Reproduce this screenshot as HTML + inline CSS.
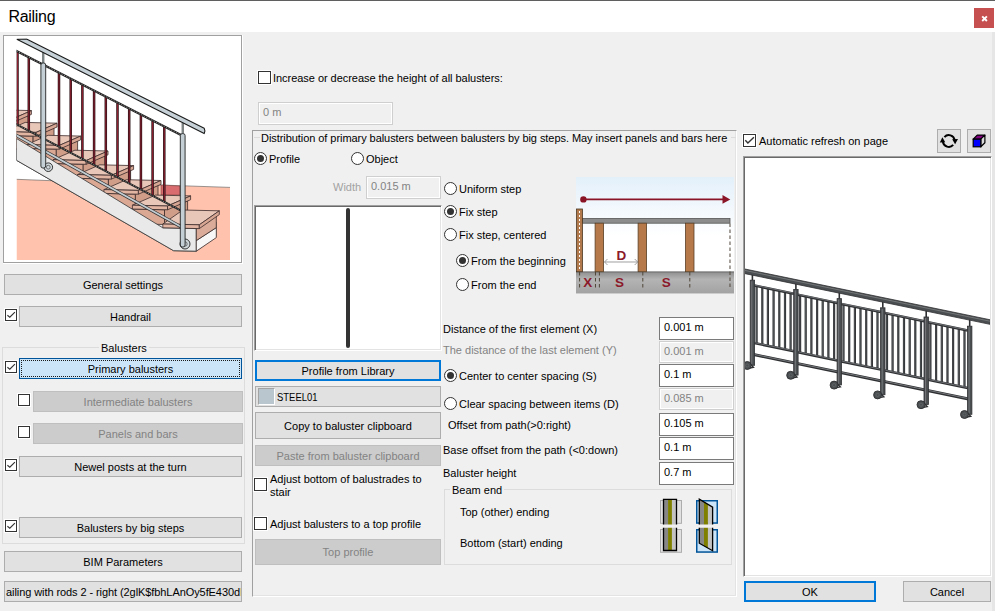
<!DOCTYPE html>
<html><head><meta charset="utf-8">
<style>
html,body{margin:0;padding:0;width:995px;height:611px;overflow:hidden;background:#f0f0f0;}
body{position:relative;font-family:"Liberation Sans",sans-serif;font-size:11px;color:#000;}
.a{position:absolute;box-sizing:border-box;}
.t{position:absolute;white-space:nowrap;line-height:13px;}
.g{color:#838383;}
.btn{position:absolute;box-sizing:border-box;background:#e1e1e1;border:1px solid #adadad;text-align:center;white-space:nowrap;line-height:13px;padding-top:4px;height:21px;}
.dis{background:#cccccc;border-color:#bfbfbf;color:#838383;}
.cb{position:absolute;box-sizing:border-box;width:12px;height:12px;border:1px solid #333;background:#fff;box-shadow:0 0 0 1px #fff;}
.cb.c13{width:13px;height:13px;}
.cb svg{position:absolute;left:-1px;top:-1px;}
.rb{position:absolute;box-sizing:border-box;width:13px;height:13px;border:1px solid #333;border-radius:50%;background:#fff;}
.rb.on::after{content:"";position:absolute;left:2px;top:2px;width:7px;height:7px;border-radius:50%;background:#333;}
.tb{position:absolute;box-sizing:border-box;background:#fff;border:1px solid #7a7a7a;white-space:nowrap;overflow:hidden;padding-left:4px;line-height:13px;padding-top:3px;}
.tb.d{background:#f0f0f0;border-color:#cfcfcf;color:#838383;box-shadow:inset 0 0 0 1px #fff;}
.sunk{position:absolute;box-sizing:border-box;background:#fff;border:1px solid;border-color:#a0a0a0 #fff #fff #a0a0a0;box-shadow:inset 1px 1px #696969,inset -1px -1px #e3e3e3;}
</style></head><body>
<!-- title bar -->
<div class="a" style="left:0;top:0;width:995px;height:32px;background:#fff;border-top:1px solid #5f5f5f;"></div>
<div class="t" style="left:8.5px;top:7px;font-size:16px;line-height:19px;letter-spacing:-0.3px;">Railing</div>
<div class="a" style="left:974px;top:8px;width:20px;height:20px;background:#c64f4f;"></div>
<svg class="a" style="left:974px;top:8px" width="20" height="20" viewBox="0 0 20 20"><path d="M8.2,8.3 L12.9,13 M12.9,8.3 L8.2,13" stroke="#fff" stroke-width="1.9" fill="none"/></svg>
<div class="a" style="left:992px;top:32px;width:3px;height:579px;background:#e6e6e6;"></div>

<!-- left column -->
<div class="a" style="left:3px;top:35px;width:240px;height:229px;border:1px solid;border-color:#fff;"></div>
<div class="a" style="left:3px;top:35px;width:239px;height:228px;border:1px solid #a0a0a0;background:#fff;"></div>
<svg class="a" style="left:0;top:0" width="250" height="270" viewBox="0 0 250 270"><defs><clipPath id="stc"><rect x="16.5" y="38.3" width="213.5" height="221.7"/></clipPath></defs><g clip-path="url(#stc)"><polygon points="16.5,179.3 50.5,180.8 160.0,185.0 230.0,187.4 230.0,260.0 16.5,260.0" fill="#ffc3ad"/><polyline points="16.5,179.3 160.0,185.0 230.0,187.4" fill="none" stroke="#555" stroke-width="0.6"/><polygon points="161.0,185.0 180.0,186.0 180.0,195.0 161.0,195.0" fill="#d86c6e" stroke="#6b3a3a" stroke-width="0.5"/><polygon points="16.5,136.0 163.0,222.0 216.0,222.0 216.0,236.5 196.0,251.2 173.6,250.7 16.5,160.3" fill="#e9e9e9" stroke="#333" stroke-width="0.8"/><polygon points="-19.2,122.6 8.0,123.4 8.0,136.4 -19.2,135.6" fill="#dba894" stroke="#3b2b2b" stroke-width="0.8" stroke-linejoin="round"/><polygon points="8.0,123.4 28.4,115.4 28.4,143.5 8.0,136.4" fill="#d09d88" stroke="#3b2b2b" stroke-width="0.8" stroke-linejoin="round"/><polygon points="-20.2,118.8 0.3,109.8 31.4,110.6 11.0,119.6" fill="#e9c7b8" stroke="#3b2b2b" stroke-width="0.8" stroke-linejoin="round"/><polygon points="-20.2,118.8 11.0,119.6 11.0,123.4 -20.2,122.6" fill="#e2b5a3" stroke="#3b2b2b" stroke-width="0.8" stroke-linejoin="round"/><polygon points="11.0,119.6 31.4,110.6 31.4,114.4 11.0,123.4" fill="#d8a794" stroke="#3b2b2b" stroke-width="0.8" stroke-linejoin="round"/><polygon points="5.3,135.4 33.1,136.2 33.1,149.5 5.3,148.7" fill="#dba894" stroke="#3b2b2b" stroke-width="0.8" stroke-linejoin="round"/><polygon points="33.1,136.2 54.0,128.0 54.0,157.7 33.1,149.5" fill="#d09d88" stroke="#3b2b2b" stroke-width="0.8" stroke-linejoin="round"/><polygon points="4.3,131.6 25.2,122.4 57.0,123.2 36.1,132.4" fill="#e9c7b8" stroke="#3b2b2b" stroke-width="0.8" stroke-linejoin="round"/><polygon points="4.3,131.6 36.1,132.4 36.1,136.2 4.3,135.4" fill="#e2b5a3" stroke="#3b2b2b" stroke-width="0.8" stroke-linejoin="round"/><polygon points="36.1,132.4 57.0,123.2 57.0,127.0 36.1,136.2" fill="#d8a794" stroke="#3b2b2b" stroke-width="0.8" stroke-linejoin="round"/><polygon points="27.8,148.4 56.3,149.2 56.3,162.9 27.8,162.1" fill="#dba894" stroke="#3b2b2b" stroke-width="0.8" stroke-linejoin="round"/><polygon points="56.3,149.2 77.6,140.9 77.6,170.8 56.3,162.9" fill="#d09d88" stroke="#3b2b2b" stroke-width="0.8" stroke-linejoin="round"/><polygon points="26.8,144.6 48.1,135.3 80.6,136.1 59.3,145.4" fill="#e9c7b8" stroke="#3b2b2b" stroke-width="0.8" stroke-linejoin="round"/><polygon points="26.8,144.6 59.3,145.4 59.3,149.2 26.8,148.4" fill="#e2b5a3" stroke="#3b2b2b" stroke-width="0.8" stroke-linejoin="round"/><polygon points="59.3,145.4 80.6,136.1 80.6,139.9 59.3,149.2" fill="#d8a794" stroke="#3b2b2b" stroke-width="0.8" stroke-linejoin="round"/><polygon points="54.1,163.5 83.2,164.3 83.2,178.2 54.1,177.4" fill="#dba894" stroke="#3b2b2b" stroke-width="0.8" stroke-linejoin="round"/><polygon points="83.2,164.3 105.0,155.8 105.0,186.0 83.2,178.2" fill="#d09d88" stroke="#3b2b2b" stroke-width="0.8" stroke-linejoin="round"/><polygon points="53.1,159.7 74.9,150.2 108.0,151.0 86.2,160.5" fill="#e9c7b8" stroke="#3b2b2b" stroke-width="0.8" stroke-linejoin="round"/><polygon points="53.1,159.7 86.2,160.5 86.2,164.3 53.1,163.5" fill="#e2b5a3" stroke="#3b2b2b" stroke-width="0.8" stroke-linejoin="round"/><polygon points="86.2,160.5 108.0,151.0 108.0,154.8 86.2,164.3" fill="#d8a794" stroke="#3b2b2b" stroke-width="0.8" stroke-linejoin="round"/><polygon points="78.6,178.3 108.4,179.1 108.4,193.3 78.6,192.5" fill="#dba894" stroke="#3b2b2b" stroke-width="0.8" stroke-linejoin="round"/><polygon points="108.4,179.1 130.6,170.4 130.6,200.2 108.4,193.3" fill="#d09d88" stroke="#3b2b2b" stroke-width="0.8" stroke-linejoin="round"/><polygon points="77.6,174.5 99.8,164.8 133.6,165.6 111.4,175.3" fill="#e9c7b8" stroke="#3b2b2b" stroke-width="0.8" stroke-linejoin="round"/><polygon points="77.6,174.5 111.4,175.3 111.4,179.1 77.6,178.3" fill="#e2b5a3" stroke="#3b2b2b" stroke-width="0.8" stroke-linejoin="round"/><polygon points="111.4,175.3 133.6,165.6 133.6,169.4 111.4,179.1" fill="#d8a794" stroke="#3b2b2b" stroke-width="0.8" stroke-linejoin="round"/><polygon points="104.9,193.4 135.4,194.2 135.4,208.7 104.9,207.9" fill="#dba894" stroke="#3b2b2b" stroke-width="0.8" stroke-linejoin="round"/><polygon points="135.4,194.2 158.0,185.3 158.0,215.4 135.4,208.7" fill="#d09d88" stroke="#3b2b2b" stroke-width="0.8" stroke-linejoin="round"/><polygon points="103.9,189.6 126.5,179.7 161.0,180.5 138.4,190.4" fill="#e9c7b8" stroke="#3b2b2b" stroke-width="0.8" stroke-linejoin="round"/><polygon points="103.9,189.6 138.4,190.4 138.4,194.2 103.9,193.4" fill="#e2b5a3" stroke="#3b2b2b" stroke-width="0.8" stroke-linejoin="round"/><polygon points="138.4,190.4 161.0,180.5 161.0,184.3 138.4,194.2" fill="#d8a794" stroke="#3b2b2b" stroke-width="0.8" stroke-linejoin="round"/><polygon points="133.4,209.0 164.5,209.8 164.5,224.5 133.4,223.7" fill="#dba894" stroke="#3b2b2b" stroke-width="0.8" stroke-linejoin="round"/><polygon points="164.5,209.8 187.6,200.7 187.6,231.9 164.5,224.5" fill="#d09d88" stroke="#3b2b2b" stroke-width="0.8" stroke-linejoin="round"/><polygon points="132.4,205.2 155.5,195.1 190.6,195.9 167.5,206.0" fill="#e9c7b8" stroke="#3b2b2b" stroke-width="0.8" stroke-linejoin="round"/><polygon points="132.4,205.2 167.5,206.0 167.5,209.8 132.4,209.0" fill="#e2b5a3" stroke="#3b2b2b" stroke-width="0.8" stroke-linejoin="round"/><polygon points="167.5,206.0 190.6,195.9 190.6,199.7 167.5,209.8" fill="#d8a794" stroke="#3b2b2b" stroke-width="0.8" stroke-linejoin="round"/><polygon points="16.5,138.5 162.8,227.8 196.3,228.6 196.3,251.2 173.6,250.7 16.5,160.3" fill="#e9e9e9" stroke="#333" stroke-width="0.8"/><polygon points="196.3,240.6 216.3,227.6 216.3,237.6 196.3,251.2" fill="#f7f7f7" stroke="#3b2b2b" stroke-width="0.8" stroke-linejoin="round"/><polygon points="196.3,228.6 216.3,215.6 216.3,227.6 196.3,240.6" fill="#d9ab98" stroke="#3b2b2b" stroke-width="0.8" stroke-linejoin="round"/><polygon points="162.8,224.0 182.8,210.0 219.3,210.8 199.3,224.8" fill="#e9c7b8" stroke="#3b2b2b" stroke-width="0.8" stroke-linejoin="round"/><polygon points="162.8,224.0 199.3,224.8 199.3,228.6 162.8,227.8" fill="#e2b5a3" stroke="#3b2b2b" stroke-width="0.8" stroke-linejoin="round"/><polygon points="199.3,224.8 219.3,210.8 219.3,214.6 199.3,228.6" fill="#d8a794" stroke="#3b2b2b" stroke-width="0.8" stroke-linejoin="round"/><line x1="17.5" y1="51.5" x2="17.5" y2="124.8" stroke="#2a1216" stroke-width="2.5"/><line x1="17.5" y1="51.5" x2="17.5" y2="124.8" stroke="#8c2030" stroke-width="1.1"/><line x1="28.8" y1="57.2" x2="28.8" y2="130.7" stroke="#2a1216" stroke-width="2.5"/><line x1="28.8" y1="57.2" x2="28.8" y2="130.7" stroke="#8c2030" stroke-width="1.1"/><line x1="59.0" y1="72.7" x2="59.0" y2="146.6" stroke="#2a1216" stroke-width="2.5"/><line x1="59.0" y1="72.7" x2="59.0" y2="146.6" stroke="#8c2030" stroke-width="1.1"/><line x1="70.7" y1="78.6" x2="70.7" y2="152.7" stroke="#2a1216" stroke-width="2.5"/><line x1="70.7" y1="78.6" x2="70.7" y2="152.7" stroke="#8c2030" stroke-width="1.1"/><line x1="82.4" y1="84.6" x2="82.4" y2="158.9" stroke="#2a1216" stroke-width="2.5"/><line x1="82.4" y1="84.6" x2="82.4" y2="158.9" stroke="#8c2030" stroke-width="1.1"/><line x1="94.1" y1="90.6" x2="94.1" y2="165.0" stroke="#2a1216" stroke-width="2.5"/><line x1="94.1" y1="90.6" x2="94.1" y2="165.0" stroke="#8c2030" stroke-width="1.1"/><line x1="105.8" y1="96.6" x2="105.8" y2="171.1" stroke="#2a1216" stroke-width="2.5"/><line x1="105.8" y1="96.6" x2="105.8" y2="171.1" stroke="#8c2030" stroke-width="1.1"/><line x1="117.5" y1="102.6" x2="117.5" y2="177.3" stroke="#2a1216" stroke-width="2.5"/><line x1="117.5" y1="102.6" x2="117.5" y2="177.3" stroke="#8c2030" stroke-width="1.1"/><line x1="129.2" y1="108.5" x2="129.2" y2="183.4" stroke="#2a1216" stroke-width="2.5"/><line x1="129.2" y1="108.5" x2="129.2" y2="183.4" stroke="#8c2030" stroke-width="1.1"/><line x1="140.9" y1="114.5" x2="140.9" y2="189.6" stroke="#2a1216" stroke-width="2.5"/><line x1="140.9" y1="114.5" x2="140.9" y2="189.6" stroke="#8c2030" stroke-width="1.1"/><line x1="152.6" y1="120.5" x2="152.6" y2="195.7" stroke="#2a1216" stroke-width="2.5"/><line x1="152.6" y1="120.5" x2="152.6" y2="195.7" stroke="#8c2030" stroke-width="1.1"/><line x1="164.3" y1="126.5" x2="164.3" y2="201.9" stroke="#2a1216" stroke-width="2.5"/><line x1="164.3" y1="126.5" x2="164.3" y2="201.9" stroke="#8c2030" stroke-width="1.1"/><line x1="14" y1="49.7" x2="181" y2="135.0" stroke="#222" stroke-width="2.2"/><line x1="14" y1="49.7" x2="181" y2="135.0" stroke="#ddd" stroke-width="0.6" stroke-dasharray="1.2 1.6"/><line x1="14" y1="123.0" x2="181" y2="210.6" stroke="#222" stroke-width="2"/><line x1="14" y1="123.0" x2="181" y2="210.6" stroke="#ccc" stroke-width="0.6" stroke-dasharray="1.2 1.6"/><line x1="14" y1="134.0" x2="182" y2="227.3" stroke="#333" stroke-width="3.2"/><line x1="14" y1="134.0" x2="182" y2="227.3" stroke="#c3cdd2" stroke-width="1.8"/><line x1="43.3" y1="51.5" x2="43.3" y2="63" stroke="#444" stroke-width="2"/><line x1="43.3" y1="51.5" x2="43.3" y2="63" stroke="#9aa" stroke-width="0.8"/><circle cx="48.3" cy="167.2" r="4.3" fill="#d0d8dc" stroke="#222" stroke-width="0.9"/><circle cx="48.3" cy="167.2" r="1.9" fill="none" stroke="#444" stroke-width="0.7"/><rect x="40.9" y="63" width="4.8" height="105" rx="2" fill="#c3cfd5" stroke="#222" stroke-width="0.9"/><line x1="182.7" y1="123" x2="182.7" y2="133.6" stroke="#444" stroke-width="2"/><line x1="182.7" y1="123" x2="182.7" y2="133.6" stroke="#9aa" stroke-width="0.8"/><circle cx="185" cy="244" r="5" fill="#d0d8dc" stroke="#222" stroke-width="0.9"/><circle cx="185" cy="244" r="2.2" fill="none" stroke="#444" stroke-width="0.7"/><rect x="180.29999999999998" y="133.6" width="4.8" height="113.4" rx="2" fill="#c3cfd5" stroke="#222" stroke-width="0.9"/><path d="M16.8,39.3 L26.5,39 L204.2,128.2 Q205.6,130.9 204.2,133.6 Z" fill="#c6d1d7" stroke="#1a1a1a" stroke-width="1.1" stroke-linejoin="round"/></g></svg>
<div class="btn" style="left:4px;top:274px;width:238px;">General settings</div>
<div class="cb" style="left:5px;top:309px;"><svg width="12" height="12" viewBox="0 0 12 12"><polyline points="2.4,6.3 4.8,8.2 9.9,3.2" fill="none" stroke="#333" stroke-width="1.15"/></svg>
</div>
<div class="btn" style="left:19px;top:306px;width:223px;">Handrail</div>
<div class="a" style="left:2px;top:347px;width:243px;height:197px;border:1px solid #dcdcdc;"></div>
<div class="t" style="left:99px;top:342px;background:#f0f0f0;padding:0 2px;">Balusters</div>
<div class="cb" style="left:5px;top:361px;"><svg width="12" height="12" viewBox="0 0 12 12"><polyline points="2.4,6.3 4.8,8.2 9.9,3.2" fill="none" stroke="#333" stroke-width="1.15"/></svg>
</div>
<div class="btn" style="left:19px;top:358px;width:223px;background:#cce4f7;border-color:#005499;">Primary balusters</div>
<div class="a" style="left:21px;top:360px;width:219px;height:17px;border:1px dotted #1a1a1a;"></div>
<div class="cb" style="left:18px;top:394px;"></div>
<div class="btn dis" style="left:33px;top:391px;width:210px;">Intermediate balusters</div>
<div class="cb" style="left:18px;top:426px;"></div>
<div class="btn dis" style="left:33px;top:423px;width:210px;">Panels and bars</div>
<div class="cb" style="left:5px;top:459px;"><svg width="12" height="12" viewBox="0 0 12 12"><polyline points="2.4,6.3 4.8,8.2 9.9,3.2" fill="none" stroke="#333" stroke-width="1.15"/></svg>
</div>
<div class="btn" style="left:19px;top:456px;width:223px;">Newel posts at the turn</div>
<div class="cb" style="left:5px;top:520px;"><svg width="12" height="12" viewBox="0 0 12 12"><polyline points="2.4,6.3 4.8,8.2 9.9,3.2" fill="none" stroke="#333" stroke-width="1.15"/></svg>
</div>
<div class="btn" style="left:19px;top:517px;width:223px;">Balusters by big steps</div>
<div class="btn" style="left:4px;top:551px;width:238px;">BIM Parameters</div>
<div class="btn" style="left:4px;top:581px;width:238px;text-align:left;overflow:hidden;padding-left:1px;letter-spacing:-0.08px;">ailing with rods 2 - right (2glK$fbhLAnOy5fE430dI</div>

<!-- middle -->
<div class="cb c13" style="left:258px;top:71px;"></div>
<div class="t" style="left:273px;top:72px;letter-spacing:-0.04px;">Increase or decrease the height of all balusters:</div>
<div class="tb d" style="left:258px;top:102px;width:135px;height:23px;">0 m</div>
<div class="a" style="left:252px;top:130px;width:485px;height:467px;border:1px solid;border-color:#a0a0a0 #fff #fff #a0a0a0;box-shadow:inset -1px -1px #e3e3e3;"></div>
<div class="a" style="left:254px;top:137px;width:6px;height:1px;background:#dcdcdc;"></div>
<div class="a" style="left:731px;top:137px;width:5px;height:1px;background:#dcdcdc;"></div>
<div class="t" style="left:261px;top:132px;letter-spacing:-0.06px;">Distribution of primary balusters between balusters by big steps. May insert panels and bars here</div>
<div class="rb on" style="left:254px;top:152px;"></div>
<div class="t" style="left:269px;top:153px;">Profile</div>
<div class="rb" style="left:351px;top:152px;"></div>
<div class="t" style="left:366px;top:153px;">Object</div>
<div class="t" style="left:333px;top:181px;color:#a2a2a2;">Width</div>
<div class="tb d" style="left:366px;top:176px;width:75px;height:23px;">0.015 m</div>
<div class="sunk" style="left:254px;top:205px;width:188px;height:146px;"></div>
<div class="a" style="left:346px;top:208px;width:4px;height:140px;background:#333;border-radius:2px;"></div>
<div class="btn" style="left:255px;top:360px;width:186px;height:21px;border:2px solid #0078d7;padding-top:3px;">Profile from Library</div>
<div class="btn" style="left:255px;top:386px;width:186px;text-align:left;padding-left:21px;"><span style="display:inline-block;transform:scaleX(0.86);transform-origin:0 0;">STEEL01</span></div>
<div class="a" style="left:258px;top:388px;width:17px;height:17px;background:#bac6cd;border:1px solid;border-color:#a3a3a3 #fff #fff #a3a3a3;"></div>
<div class="btn" style="left:255px;top:412px;width:186px;height:27px;padding-top:7px;">Copy to baluster clipboard</div>
<div class="btn dis" style="left:255px;top:445px;width:186px;">Paste from baluster clipboard</div>
<div class="cb c13" style="left:254px;top:478px;"></div>
<div class="t" style="left:270px;top:473px;">Adjust bottom of balustrades to<br>stair</div>
<div class="cb c13" style="left:254px;top:517px;"></div>
<div class="t" style="left:270px;top:518px;">Adjust balusters to a top profile</div>
<div class="btn dis" style="left:255px;top:539px;width:186px;height:26px;padding-top:6px;">Top profile</div>

<div class="rb" style="left:444px;top:182px;"></div>
<div class="t" style="left:459px;top:183px;">Uniform step</div>
<div class="rb on" style="left:444px;top:205px;"></div>
<div class="t" style="left:459px;top:206px;">Fix step</div>
<div class="rb" style="left:444px;top:228px;"></div>
<div class="t" style="left:459px;top:229px;">Fix step, centered</div>
<div class="rb on" style="left:456px;top:254px;"></div>
<div class="t" style="left:471px;top:255px;">From the beginning</div>
<div class="rb" style="left:456px;top:278px;"></div>
<div class="t" style="left:471px;top:279px;">From the end</div>
<svg class="a" style="left:576px;top:177px" width="158.3" height="116.5" viewBox="0 0 158.3 116.5"><defs><linearGradient id="dbg" x1="0" y1="0" x2="0" y2="1"><stop offset="0" stop-color="#e3f0fa"/><stop offset="0.5" stop-color="#ffffff"/></linearGradient><linearGradient id="dgr" x1="0" y1="0" x2="0" y2="1"><stop offset="0" stop-color="#8e8e8e"/><stop offset="0.35" stop-color="#b4b4b4"/><stop offset="1" stop-color="#a2a2a2"/></linearGradient></defs><rect x="0" y="0" width="158.3" height="116.5" fill="url(#dbg)"/><rect x="0" y="94.69999999999999" width="158.3" height="21.80000000000001" fill="url(#dgr)"/><line x1="0" y1="95" x2="158.3" y2="95" stroke="#6e6e6e" stroke-width="1"/><circle cx="7.399999999999977" cy="22.400000000000006" r="3.2" fill="#8a1526"/><line x1="7.399999999999977" y1="22.400000000000006" x2="148" y2="22.400000000000006" stroke="#8a1526" stroke-width="1.8"/><polygon points="146.5,18 154.29999999999995,22.400000000000006 146.5,26.80000000000001" fill="#8a1526"/><rect x="6.5" y="41.5" width="147.5" height="4.7" fill="#8c8c8c" stroke="#555" stroke-width="0.8"/><rect x="0.6000000000000227" y="32" width="5.8" height="62.69999999999999" fill="#b27a4c" stroke="#4a3520" stroke-width="0.8"/><line x1="3.5" y1="34" x2="3.5" y2="94" stroke="#fff" stroke-width="1" stroke-dasharray="2 2"/><rect x="19.100000000000023" y="46.19999999999999" width="8.5" height="48.5" fill="#b5794a" stroke="#5a4026" stroke-width="0.8"/><rect x="62.10000000000002" y="46.19999999999999" width="8.5" height="48.5" fill="#b5794a" stroke="#5a4026" stroke-width="0.8"/><rect x="109.5" y="46.19999999999999" width="8.5" height="48.5" fill="#b5794a" stroke="#5a4026" stroke-width="0.8"/><line x1="3.6000000000000227" y1="95" x2="3.6000000000000227" y2="111.5" stroke="#4f4538" stroke-width="1" stroke-dasharray="3.5 2.5"/><line x1="19.5" y1="95" x2="19.5" y2="111.5" stroke="#4f4538" stroke-width="1" stroke-dasharray="3.5 2.5"/><line x1="23.399999999999977" y1="95" x2="23.399999999999977" y2="111.5" stroke="#4f4538" stroke-width="1" stroke-dasharray="3.5 2.5"/><line x1="66.79999999999995" y1="95" x2="66.79999999999995" y2="111.5" stroke="#4f4538" stroke-width="1" stroke-dasharray="3.5 2.5"/><line x1="113.79999999999995" y1="95" x2="113.79999999999995" y2="111.5" stroke="#4f4538" stroke-width="1" stroke-dasharray="3.5 2.5"/><line x1="154" y1="46.5" x2="154" y2="111.5" stroke="#4f4538" stroke-width="1" stroke-dasharray="3.5 2.5"/><line x1="28.5" y1="85" x2="61.700000000000045" y2="85" stroke="#888" stroke-width="0.8"/><polyline points="31.5,82 28.5,85 31.5,88" fill="none" stroke="#888" stroke-width="0.8"/><polyline points="58.700000000000045,82 61.700000000000045,85 58.700000000000045,88" fill="none" stroke="#888" stroke-width="0.8"/><text x="45.5" y="83.19999999999999" font-size="13.5" font-family="Liberation Sans" font-weight="bold" fill="#8b1a2a" text-anchor="middle">D</text><text x="11.700000000000045" y="109.80000000000001" font-size="13.5" font-family="Liberation Sans" font-weight="bold" fill="#8b1a2a" text-anchor="middle">X</text><text x="43.39999999999998" y="109.80000000000001" font-size="13.5" font-family="Liberation Sans" font-weight="bold" fill="#8b1a2a" text-anchor="middle">S</text><text x="90.20000000000005" y="109.80000000000001" font-size="13.5" font-family="Liberation Sans" font-weight="bold" fill="#8b1a2a" text-anchor="middle">S</text></svg>

<div class="t" style="left:443px;top:323px;">Distance of the first element (X)</div>
<div class="tb" style="left:659px;top:317px;width:75px;height:23px;">0.001 m</div>
<div class="t g" style="left:443px;top:344px;">The distance of the last element (Y)</div>
<div class="tb d" style="left:659px;top:341px;width:75px;height:22px;">0.001 m</div>
<div class="rb on" style="left:444px;top:369px;"></div>
<div class="t" style="left:459px;top:370px;">Center to center spacing (S)</div>
<div class="tb" style="left:659px;top:364px;width:75px;height:23px;">0.1 m</div>
<div class="rb" style="left:444px;top:397px;"></div>
<div class="t" style="left:459px;top:398px;">Clear spacing between items (D)</div>
<div class="tb d" style="left:659px;top:388px;width:75px;height:22px;">0.085 m</div>
<div class="t" style="left:448px;top:419px;">Offset from path(&gt;0:right)</div>
<div class="tb" style="left:659px;top:413px;width:75px;height:23px;">0.105 m</div>
<div class="t" style="left:443px;top:444px;">Base offset from the path (&lt;0:down)</div>
<div class="tb" style="left:659px;top:437px;width:75px;height:23px;">0.1 m</div>
<div class="t" style="left:443px;top:467px;">Baluster height</div>
<div class="tb" style="left:659px;top:462px;width:75px;height:23px;">0.7 m</div>

<div class="a" style="left:444px;top:489px;width:288px;height:76px;border:1px solid #dcdcdc;"></div>
<div class="t" style="left:450px;top:484px;background:#f0f0f0;padding:0 2px;">Beam end</div>
<div class="t" style="left:460px;top:506px;">Top (other) ending</div>
<div class="t" style="left:460px;top:537px;">Bottom (start) ending</div>
<svg class="a" style="left:655px;top:495px" width="70" height="62" viewBox="655 495 70 62"><rect x="660.5" y="500.5" width="21" height="22.799999999999955" fill="#e1e1e1" stroke="#adadad" stroke-width="1"/><clipPath id="bc663499"><polygon points="663.5,499.3 676.5,499.3 676.5,524.5 663.5,524.5"/></clipPath><g clip-path="url(#bc663499)"><rect x="663.5" y="490" width="4.55" height="70" fill="#878787"/><rect x="668.05" y="490" width="3.9" height="70" fill="#808000"/><rect x="671.95" y="490" width="4.55" height="70" fill="#c3c3c3"/></g><polyline points="663.5,524.5 663.5,499.3 676.5,499.3 676.5,524.5" fill="none" stroke="#000" stroke-width="1.3" stroke-linejoin="miter"/><rect x="660.5" y="529.5" width="21" height="22.799999999999955" fill="#e1e1e1" stroke="#adadad" stroke-width="1"/><clipPath id="bc663527"><polygon points="663.5,527.8 676.5,527.8 676.5,550.5 663.5,550.5"/></clipPath><g clip-path="url(#bc663527)"><rect x="663.5" y="490" width="4.55" height="70" fill="#878787"/><rect x="668.05" y="490" width="3.9" height="70" fill="#808000"/><rect x="671.95" y="490" width="4.55" height="70" fill="#c3c3c3"/></g><polyline points="663.5,527.8 663.5,550.5 676.5,550.5 676.5,527.8" fill="none" stroke="#000" stroke-width="1.3" stroke-linejoin="miter"/><rect x="696.75" y="500.75" width="20.5" height="22.299999999999955" fill="#cce4f7" stroke="#005499" stroke-width="1.5"/><clipPath id="bc699499"><polygon points="699.3,499.2 712.6,507.2 712.6,524.5 699.3,524.5"/></clipPath><g clip-path="url(#bc699499)"><rect x="699.3" y="490" width="4.655000000000023" height="70" fill="#878787"/><rect x="703.9549999999999" y="490" width="3.99000000000002" height="70" fill="#808000"/><rect x="707.945" y="490" width="4.655000000000023" height="70" fill="#c3c3c3"/></g><polyline points="699.3,524.5 699.3,499.2 712.6,507.2 712.6,524.5" fill="none" stroke="#000" stroke-width="1.3" stroke-linejoin="miter"/><rect x="696.75" y="529.75" width="20.5" height="22.299999999999955" fill="#cce4f7" stroke="#005499" stroke-width="1.5"/><clipPath id="bc699527"><polygon points="699.3,527.8 712.6,527.8 712.6,550.7 699.3,543.2"/></clipPath><g clip-path="url(#bc699527)"><rect x="699.3" y="490" width="4.655000000000023" height="70" fill="#878787"/><rect x="703.9549999999999" y="490" width="3.99000000000002" height="70" fill="#808000"/><rect x="707.945" y="490" width="4.655000000000023" height="70" fill="#c3c3c3"/></g><polyline points="699.3,527.8 699.3,543.2 712.6,550.7 712.6,527.8" fill="none" stroke="#000" stroke-width="1.3" stroke-linejoin="miter"/></svg>

<!-- right -->
<div class="cb c13" style="left:743px;top:134px;"><svg width="13" height="13" viewBox="0 0 13 13"><polyline points="2.3,6.3 4.9,9.1 10.9,3.2" fill="none" stroke="#333" stroke-width="1.4"/></svg>
</div>
<div class="t" style="left:759px;top:135px;">Automatic refresh on page</div>
<div class="btn" style="left:937px;top:129px;width:24px;height:24px;"></div>
<div class="btn" style="left:967px;top:129px;width:24px;height:24px;"></div>
<svg class="a" style="left:930px;top:125px" width="65" height="32" viewBox="930 125 65 32"><path d="M944.42,137.05 A5.9,5.9 0 0 1 954.64,140.18" fill="none" stroke="#000" stroke-width="2"/><path d="M953.18,144.95 A5.9,5.9 0 0 1 942.96,141.82" fill="none" stroke="#000" stroke-width="2"/><polygon points="952.2,139.3 958.0,139.0 955.1,144.2" fill="#000"/><polygon points="939.8,142.5 945.2,142.2 942.4,137.2" fill="#000"/><polygon points="973.2,139.2 977.2,135.1 984.9,135.1 980.8,139.2" fill="#800080" stroke="#000" stroke-width="1.2" stroke-linejoin="round"/><polygon points="980.8,139.2 984.9,135.1 984.9,142.8 980.8,146.8" fill="#d9d9d9" stroke="#000" stroke-width="1.2" stroke-linejoin="round"/><rect x="973.2" y="139.2" width="7.6" height="7.6" fill="#0000ff" stroke="#000" stroke-width="1.2"/></svg>
<div class="sunk" style="left:743px;top:156px;width:249px;height:421px;"></div>
<svg class="a" style="left:745px;top:158px" width="245" height="416" viewBox="745 158 245 416"><line x1="752.4" y1="354.3" x2="969.7" y2="399.2" stroke="#2e3032" stroke-width="3"/><line x1="752.4" y1="354.0" x2="969.7" y2="398.9" stroke="#8a8d90" stroke-width="0.8"/><line x1="756.6" y1="286.0" x2="756.6" y2="343.5" stroke="#2e3032" stroke-width="2.2"/><line x1="756.4" y1="286.0" x2="756.4" y2="343.5" stroke="#6a6d70" stroke-width="0.6"/><line x1="762.3" y1="287.1" x2="762.3" y2="344.6" stroke="#2e3032" stroke-width="2.2"/><line x1="762.1" y1="287.1" x2="762.1" y2="344.6" stroke="#6a6d70" stroke-width="0.6"/><line x1="767.9" y1="288.3" x2="767.9" y2="345.8" stroke="#2e3032" stroke-width="2.2"/><line x1="767.7" y1="288.3" x2="767.7" y2="345.8" stroke="#6a6d70" stroke-width="0.6"/><line x1="773.6" y1="289.5" x2="773.6" y2="347.0" stroke="#2e3032" stroke-width="2.2"/><line x1="773.4" y1="289.5" x2="773.4" y2="347.0" stroke="#6a6d70" stroke-width="0.6"/><line x1="779.3" y1="290.7" x2="779.3" y2="348.2" stroke="#2e3032" stroke-width="2.2"/><line x1="779.1" y1="290.7" x2="779.1" y2="348.2" stroke="#6a6d70" stroke-width="0.6"/><line x1="785.0" y1="291.8" x2="785.0" y2="349.3" stroke="#2e3032" stroke-width="2.2"/><line x1="784.8" y1="291.8" x2="784.8" y2="349.3" stroke="#6a6d70" stroke-width="0.6"/><line x1="790.6" y1="293.0" x2="790.6" y2="350.5" stroke="#2e3032" stroke-width="2.2"/><line x1="790.4" y1="293.0" x2="790.4" y2="350.5" stroke="#6a6d70" stroke-width="0.6"/><line x1="754.4" y1="285.5" x2="793.9" y2="293.7" stroke="#2e3032" stroke-width="2.6"/><line x1="754.4" y1="285.1" x2="793.9" y2="293.3" stroke="#8a8d90" stroke-width="0.7"/><line x1="754.4" y1="343.0" x2="793.9" y2="351.2" stroke="#2e3032" stroke-width="2.6"/><line x1="754.4" y1="342.6" x2="793.9" y2="350.8" stroke="#8a8d90" stroke-width="0.7"/><line x1="800.1" y1="295.2" x2="800.1" y2="352.7" stroke="#2e3032" stroke-width="2.2"/><line x1="799.9" y1="295.2" x2="799.9" y2="352.7" stroke="#6a6d70" stroke-width="0.6"/><line x1="805.7" y1="296.3" x2="805.7" y2="353.8" stroke="#2e3032" stroke-width="2.2"/><line x1="805.5" y1="296.3" x2="805.5" y2="353.8" stroke="#6a6d70" stroke-width="0.6"/><line x1="811.4" y1="297.5" x2="811.4" y2="355.0" stroke="#2e3032" stroke-width="2.2"/><line x1="811.2" y1="297.5" x2="811.2" y2="355.0" stroke="#6a6d70" stroke-width="0.6"/><line x1="817.1" y1="298.7" x2="817.1" y2="356.2" stroke="#2e3032" stroke-width="2.2"/><line x1="816.9" y1="298.7" x2="816.9" y2="356.2" stroke="#6a6d70" stroke-width="0.6"/><line x1="822.7" y1="299.9" x2="822.7" y2="357.4" stroke="#2e3032" stroke-width="2.2"/><line x1="822.5" y1="299.9" x2="822.5" y2="357.4" stroke="#6a6d70" stroke-width="0.6"/><line x1="828.4" y1="301.0" x2="828.4" y2="358.5" stroke="#2e3032" stroke-width="2.2"/><line x1="828.2" y1="301.0" x2="828.2" y2="358.5" stroke="#6a6d70" stroke-width="0.6"/><line x1="834.1" y1="302.2" x2="834.1" y2="359.7" stroke="#2e3032" stroke-width="2.2"/><line x1="833.9" y1="302.2" x2="833.9" y2="359.7" stroke="#6a6d70" stroke-width="0.6"/><line x1="797.9" y1="294.7" x2="837.3" y2="302.9" stroke="#2e3032" stroke-width="2.6"/><line x1="797.9" y1="294.3" x2="837.3" y2="302.5" stroke="#8a8d90" stroke-width="0.7"/><line x1="797.9" y1="352.2" x2="837.3" y2="360.4" stroke="#2e3032" stroke-width="2.6"/><line x1="797.9" y1="351.8" x2="837.3" y2="360.0" stroke="#8a8d90" stroke-width="0.7"/><line x1="843.5" y1="304.4" x2="843.5" y2="361.9" stroke="#2e3032" stroke-width="2.2"/><line x1="843.3" y1="304.4" x2="843.3" y2="361.9" stroke="#6a6d70" stroke-width="0.6"/><line x1="849.2" y1="305.5" x2="849.2" y2="363.0" stroke="#2e3032" stroke-width="2.2"/><line x1="849.0" y1="305.5" x2="849.0" y2="363.0" stroke="#6a6d70" stroke-width="0.6"/><line x1="854.9" y1="306.7" x2="854.9" y2="364.2" stroke="#2e3032" stroke-width="2.2"/><line x1="854.7" y1="306.7" x2="854.7" y2="364.2" stroke="#6a6d70" stroke-width="0.6"/><line x1="860.5" y1="307.9" x2="860.5" y2="365.4" stroke="#2e3032" stroke-width="2.2"/><line x1="860.3" y1="307.9" x2="860.3" y2="365.4" stroke="#6a6d70" stroke-width="0.6"/><line x1="866.2" y1="309.1" x2="866.2" y2="366.6" stroke="#2e3032" stroke-width="2.2"/><line x1="866.0" y1="309.1" x2="866.0" y2="366.6" stroke="#6a6d70" stroke-width="0.6"/><line x1="871.9" y1="310.2" x2="871.9" y2="367.7" stroke="#2e3032" stroke-width="2.2"/><line x1="871.7" y1="310.2" x2="871.7" y2="367.7" stroke="#6a6d70" stroke-width="0.6"/><line x1="877.5" y1="311.4" x2="877.5" y2="368.9" stroke="#2e3032" stroke-width="2.2"/><line x1="877.3" y1="311.4" x2="877.3" y2="368.9" stroke="#6a6d70" stroke-width="0.6"/><line x1="841.3" y1="303.9" x2="880.8" y2="312.1" stroke="#2e3032" stroke-width="2.6"/><line x1="841.3" y1="303.5" x2="880.8" y2="311.7" stroke="#8a8d90" stroke-width="0.7"/><line x1="841.3" y1="361.4" x2="880.8" y2="369.6" stroke="#2e3032" stroke-width="2.6"/><line x1="841.3" y1="361.0" x2="880.8" y2="369.2" stroke="#8a8d90" stroke-width="0.7"/><line x1="887.0" y1="313.6" x2="887.0" y2="371.1" stroke="#2e3032" stroke-width="2.2"/><line x1="886.8" y1="313.6" x2="886.8" y2="371.1" stroke="#6a6d70" stroke-width="0.6"/><line x1="892.6" y1="314.7" x2="892.6" y2="372.2" stroke="#2e3032" stroke-width="2.2"/><line x1="892.4" y1="314.7" x2="892.4" y2="372.2" stroke="#6a6d70" stroke-width="0.6"/><line x1="898.3" y1="315.9" x2="898.3" y2="373.4" stroke="#2e3032" stroke-width="2.2"/><line x1="898.1" y1="315.9" x2="898.1" y2="373.4" stroke="#6a6d70" stroke-width="0.6"/><line x1="904.0" y1="317.1" x2="904.0" y2="374.6" stroke="#2e3032" stroke-width="2.2"/><line x1="903.8" y1="317.1" x2="903.8" y2="374.6" stroke="#6a6d70" stroke-width="0.6"/><line x1="909.7" y1="318.3" x2="909.7" y2="375.8" stroke="#2e3032" stroke-width="2.2"/><line x1="909.5" y1="318.3" x2="909.5" y2="375.8" stroke="#6a6d70" stroke-width="0.6"/><line x1="915.3" y1="319.4" x2="915.3" y2="376.9" stroke="#2e3032" stroke-width="2.2"/><line x1="915.1" y1="319.4" x2="915.1" y2="376.9" stroke="#6a6d70" stroke-width="0.6"/><line x1="921.0" y1="320.6" x2="921.0" y2="378.1" stroke="#2e3032" stroke-width="2.2"/><line x1="920.8" y1="320.6" x2="920.8" y2="378.1" stroke="#6a6d70" stroke-width="0.6"/><line x1="884.8" y1="313.1" x2="924.2" y2="321.3" stroke="#2e3032" stroke-width="2.6"/><line x1="884.8" y1="312.7" x2="924.2" y2="320.9" stroke="#8a8d90" stroke-width="0.7"/><line x1="884.8" y1="370.6" x2="924.2" y2="378.8" stroke="#2e3032" stroke-width="2.6"/><line x1="884.8" y1="370.2" x2="924.2" y2="378.4" stroke="#8a8d90" stroke-width="0.7"/><line x1="930.4" y1="322.8" x2="930.4" y2="380.3" stroke="#2e3032" stroke-width="2.2"/><line x1="930.2" y1="322.8" x2="930.2" y2="380.3" stroke="#6a6d70" stroke-width="0.6"/><line x1="936.1" y1="323.9" x2="936.1" y2="381.4" stroke="#2e3032" stroke-width="2.2"/><line x1="935.9" y1="323.9" x2="935.9" y2="381.4" stroke="#6a6d70" stroke-width="0.6"/><line x1="941.8" y1="325.1" x2="941.8" y2="382.6" stroke="#2e3032" stroke-width="2.2"/><line x1="941.6" y1="325.1" x2="941.6" y2="382.6" stroke="#6a6d70" stroke-width="0.6"/><line x1="947.5" y1="326.3" x2="947.5" y2="383.8" stroke="#2e3032" stroke-width="2.2"/><line x1="947.2" y1="326.3" x2="947.2" y2="383.8" stroke="#6a6d70" stroke-width="0.6"/><line x1="953.1" y1="327.5" x2="953.1" y2="385.0" stroke="#2e3032" stroke-width="2.2"/><line x1="952.9" y1="327.5" x2="952.9" y2="385.0" stroke="#6a6d70" stroke-width="0.6"/><line x1="958.8" y1="328.6" x2="958.8" y2="386.1" stroke="#2e3032" stroke-width="2.2"/><line x1="958.6" y1="328.6" x2="958.6" y2="386.1" stroke="#6a6d70" stroke-width="0.6"/><line x1="964.5" y1="329.8" x2="964.5" y2="387.3" stroke="#2e3032" stroke-width="2.2"/><line x1="964.3" y1="329.8" x2="964.3" y2="387.3" stroke="#6a6d70" stroke-width="0.6"/><line x1="928.2" y1="322.3" x2="967.7" y2="330.5" stroke="#2e3032" stroke-width="2.6"/><line x1="928.2" y1="321.9" x2="967.7" y2="330.1" stroke="#8a8d90" stroke-width="0.7"/><line x1="928.2" y1="379.8" x2="967.7" y2="388.0" stroke="#2e3032" stroke-width="2.6"/><line x1="928.2" y1="379.4" x2="967.7" y2="387.6" stroke="#8a8d90" stroke-width="0.7"/><line x1="752.4" y1="274.6" x2="752.4" y2="280.2" stroke="#2e3032" stroke-width="1.6"/><rect x="750.2" y="280.2" width="4.4" height="85.1" fill="#4b4e50" stroke="#2e3032" stroke-width="0.8"/><line x1="751.8" y1="281.2" x2="751.8" y2="364.3" stroke="#8a8d90" stroke-width="0.7"/><path d="M750.4,364.3 L753.4,367.3 L747.2,368.5" fill="none" stroke="#2e3032" stroke-width="1.4"/><circle cx="747.2" cy="365.5" r="4" fill="#4b4e50" stroke="#2e3032" stroke-width="0.9"/><circle cx="747.2" cy="365.5" r="1.6" fill="none" stroke="#6a6d70" stroke-width="0.6"/><line x1="795.9" y1="283.6" x2="795.9" y2="289.4" stroke="#2e3032" stroke-width="1.6"/><rect x="793.7" y="289.4" width="4.4" height="85.7" fill="#4b4e50" stroke="#2e3032" stroke-width="0.8"/><line x1="795.3" y1="290.4" x2="795.3" y2="374.1" stroke="#8a8d90" stroke-width="0.7"/><path d="M793.9,374.1 L796.9,377.1 L790.7,378.3" fill="none" stroke="#2e3032" stroke-width="1.4"/><circle cx="790.7" cy="375.3" r="4" fill="#4b4e50" stroke="#2e3032" stroke-width="0.9"/><circle cx="790.7" cy="375.3" r="1.6" fill="none" stroke="#6a6d70" stroke-width="0.6"/><line x1="839.3" y1="292.6" x2="839.3" y2="298.6" stroke="#2e3032" stroke-width="1.6"/><rect x="837.1" y="298.6" width="4.4" height="86.3" fill="#4b4e50" stroke="#2e3032" stroke-width="0.8"/><line x1="838.7" y1="299.6" x2="838.7" y2="383.9" stroke="#8a8d90" stroke-width="0.7"/><path d="M837.3,383.9 L840.3,386.9 L834.1,388.1" fill="none" stroke="#2e3032" stroke-width="1.4"/><circle cx="834.1" cy="385.1" r="4" fill="#4b4e50" stroke="#2e3032" stroke-width="0.9"/><circle cx="834.1" cy="385.1" r="1.6" fill="none" stroke="#6a6d70" stroke-width="0.6"/><line x1="882.8" y1="301.6" x2="882.8" y2="307.8" stroke="#2e3032" stroke-width="1.6"/><rect x="880.6" y="307.8" width="4.4" height="86.9" fill="#4b4e50" stroke="#2e3032" stroke-width="0.8"/><line x1="882.2" y1="308.8" x2="882.2" y2="393.7" stroke="#8a8d90" stroke-width="0.7"/><path d="M880.8,393.7 L883.8,396.7 L877.6,397.9" fill="none" stroke="#2e3032" stroke-width="1.4"/><circle cx="877.6" cy="394.9" r="4" fill="#4b4e50" stroke="#2e3032" stroke-width="0.9"/><circle cx="877.6" cy="394.9" r="1.6" fill="none" stroke="#6a6d70" stroke-width="0.6"/><line x1="926.2" y1="310.6" x2="926.2" y2="317.0" stroke="#2e3032" stroke-width="1.6"/><rect x="924.0" y="317.0" width="4.4" height="87.5" fill="#4b4e50" stroke="#2e3032" stroke-width="0.8"/><line x1="925.6" y1="318.0" x2="925.6" y2="403.5" stroke="#8a8d90" stroke-width="0.7"/><path d="M924.2,403.5 L927.2,406.5 L921.0,407.7" fill="none" stroke="#2e3032" stroke-width="1.4"/><circle cx="921.0" cy="404.7" r="4" fill="#4b4e50" stroke="#2e3032" stroke-width="0.9"/><circle cx="921.0" cy="404.7" r="1.6" fill="none" stroke="#6a6d70" stroke-width="0.6"/><line x1="969.7" y1="319.6" x2="969.7" y2="326.2" stroke="#2e3032" stroke-width="1.6"/><rect x="967.5" y="326.2" width="4.4" height="88.1" fill="#4b4e50" stroke="#2e3032" stroke-width="0.8"/><line x1="969.1" y1="327.2" x2="969.1" y2="413.3" stroke="#8a8d90" stroke-width="0.7"/><path d="M967.7,413.3 L970.7,416.3 L964.5,417.5" fill="none" stroke="#2e3032" stroke-width="1.4"/><circle cx="964.5" cy="414.5" r="4" fill="#4b4e50" stroke="#2e3032" stroke-width="0.9"/><circle cx="964.5" cy="414.5" r="1.6" fill="none" stroke="#6a6d70" stroke-width="0.6"/><polygon points="740,268.0 990.3,319.8 990.3,324.4 740,272.6" fill="#4b4e50" stroke="#2e3032" stroke-width="0.8"/><line x1="740" y1="269.4" x2="990" y2="321.2" stroke="#7d8082" stroke-width="0.8"/></svg>
<div class="btn" style="left:744px;top:581px;width:132px;height:21px;border:2px solid #0078d7;padding-top:3px;">OK</div>
<div class="btn" style="left:903px;top:581px;width:88px;height:21px;">Cancel</div>
</body></html>
